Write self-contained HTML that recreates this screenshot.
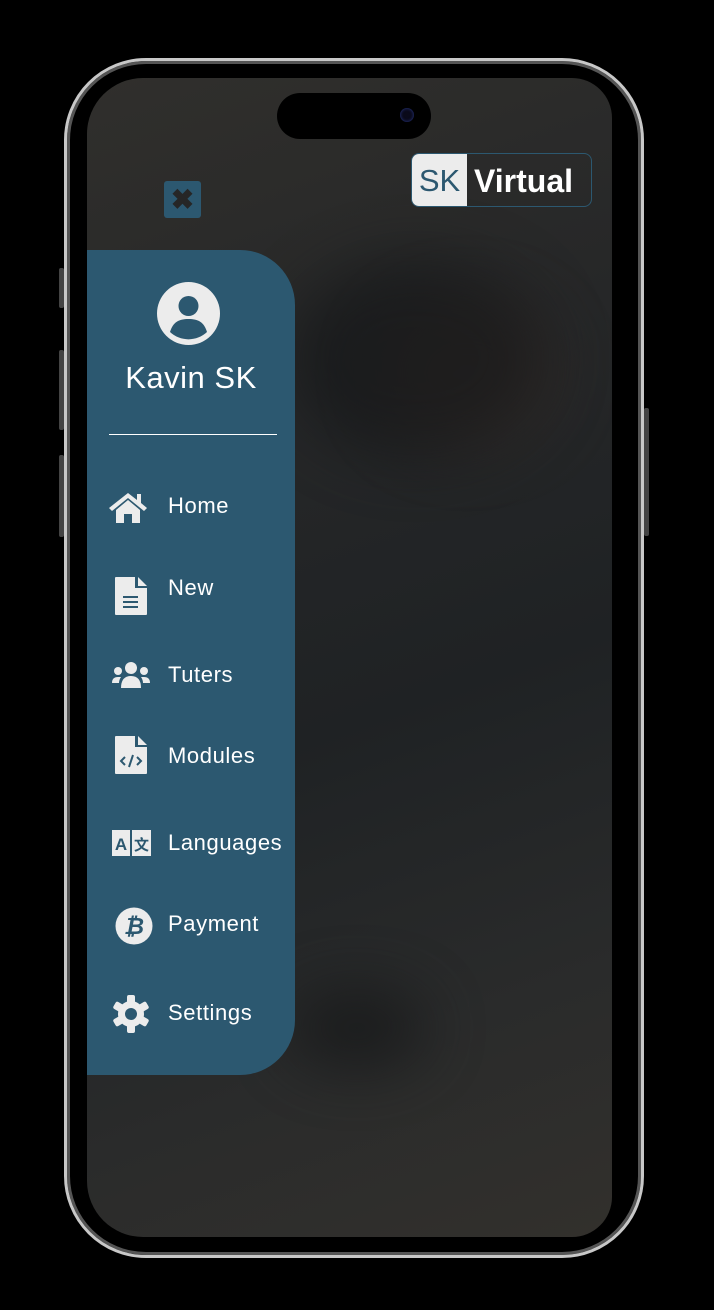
<!DOCTYPE html>
<html><head><style>
*{margin:0;padding:0;box-sizing:border-box}
body{width:714px;height:1310px;background:#000;position:relative;overflow:hidden;font-family:"Liberation Sans",sans-serif}
.frame{position:absolute;left:64px;top:58px;width:580px;height:1200px;border-radius:82px;border:3px solid #c8c8c8;background:#000;box-shadow:inset 0 0 0 3px #555}
.btn{position:absolute;background:#444;border-radius:2px}
.screen{position:absolute;left:87px;top:78px;width:525px;height:1159px;border-radius:56px 40px 40px 56px;overflow:hidden;background:linear-gradient(160deg,#302f2c 0%,#262728 30%,#1f2224 55%,#2a2b2b 80%,#32302c 100%)}
.blob{position:absolute;border-radius:50%;filter:blur(30px)}
.island{position:absolute;left:277px;top:93px;width:154px;height:46px;border-radius:23px;background:#000}
.cam{position:absolute;left:400px;top:108px;width:14px;height:14px;border-radius:50%;background:#0a0a1a;box-shadow:inset 0 0 3px #2a3a8a}
.close{position:absolute;left:164px;top:181px;width:37px;height:37px;background:#2c5870;border-radius:3px;color:#262626;font-size:28px;font-weight:bold;text-align:center;line-height:37px}
.logo{position:absolute;left:411px;top:153px;width:181px;height:54px;border:1px solid #2c5870;border-radius:8px;overflow:hidden}
.logo .sk{position:absolute;left:0;top:0;width:55px;height:54px;background:#ececec;color:#2c5870;font-size:31px;line-height:54px;text-align:center}
.logo .v{position:absolute;left:62px;top:0;color:#fff;font-size:32px;font-weight:bold;line-height:54px}
.panel{position:absolute;left:87px;top:250px;width:208px;height:825px;background:#2c5870;border-radius:0 55px 55px 0}
.name{position:absolute;left:0;width:208px;top:360px;text-align:center;color:#fff;font-size:31px;letter-spacing:.5px}
.rule{position:absolute;left:109px;top:434px;width:168px;height:1px;background:#fff}
.item{position:absolute;left:168px;color:#fff;font-size:22px;letter-spacing:.6px}
.ic{position:absolute}
</style></head><body>
<div class="btn" style="left:59px;top:268px;width:5px;height:40px"></div>
<div class="btn" style="left:59px;top:350px;width:5px;height:80px"></div>
<div class="btn" style="left:59px;top:455px;width:5px;height:82px"></div>
<div class="btn" style="left:644px;top:408px;width:5px;height:128px"></div>
<div class="frame"></div>
<div class="screen">
 <div class="blob" style="left:290px;top:220px;width:180px;height:150px;background:#3a302b;opacity:.6"></div>
 <div class="blob" style="left:200px;top:180px;width:260px;height:200px;background:#121416;opacity:.6"></div>
 <div class="blob" style="left:200px;top:910px;width:140px;height:80px;background:#151617;opacity:.7"></div>
</div>
<div class="island"></div><div class="cam"></div>
<div class="close">✖</div>
<div class="logo"><div class="sk">SK</div><div class="v">Virtual</div></div>
<div class="panel"></div>
<svg class="ic" style="left:157px;top:282px" width="63" height="63" viewBox="0 0 63 63"><circle cx="31.5" cy="31.5" r="31.5" fill="#ececec"/><circle cx="31.5" cy="24" r="10" fill="#2c5870"/><path d="M13 50 C16 40 22 37 31.5 37 C41 37 47 40 50 50 A27 27 0 0 1 13 50Z" fill="#2c5870"/></svg>
<div class="name" style="left:87px;width:208px;position:absolute">Kavin SK</div>
<div class="rule"></div>
<svg class="ic" style="left:108px;top:490px" width="40" height="33" viewBox="0 0 40 33"><path d="M20 3 L1 18 L4 21 L20 8 L36 21 L39 18 L33 13 L33 4 L29 4 L29 10Z" fill="#ececec"/><path d="M8 20 L20 10 L32 20 L32 33 L24 33 L24 24 L16 24 L16 33 L8 33Z" fill="#ececec"/></svg>
<div class="item" style="top:493px">Home</div>
<svg class="ic" style="left:115px;top:577px" width="32" height="38" viewBox="0 0 32 38"><path d="M0 1 Q0 0 1 0 L20 0 L20 11 L32 11 L32 37 Q32 38 31 38 L1 38 Q0 38 0 37Z M23 0 L32 9 L23 9Z" fill="#ececec"/><rect x="8" y="19" width="15" height="2" fill="#2c5870"/><rect x="8" y="24" width="15" height="2" fill="#2c5870"/><rect x="8" y="29" width="15" height="2" fill="#2c5870"/></svg>
<div class="item" style="top:575px">New</div>
<svg class="ic" style="left:112px;top:662px" width="38" height="26" viewBox="0 0 38 26"><circle cx="19" cy="6" r="6" fill="#ececec"/><circle cx="6" cy="9" r="4" fill="#ececec"/><circle cx="32" cy="9" r="4" fill="#ececec"/><path d="M9 26 Q9 14 19 14 Q29 14 29 26Z" fill="#ececec"/><path d="M0 21 Q0 15 6 15 L9 15 Q7 18 7 21Z M38 21 Q38 15 32 15 L29 15 Q31 18 31 21Z" fill="#ececec"/></svg>
<div class="item" style="top:662px">Tuters</div>
<svg class="ic" style="left:115px;top:736px" width="32" height="38" viewBox="0 0 32 38"><path d="M0 1 Q0 0 1 0 L20 0 L20 11 L32 11 L32 37 Q32 38 31 38 L1 38 Q0 38 0 37Z M23 0 L32 9 L23 9Z" fill="#ececec"/><path d="M10 21 L6 25 L10 29 M22 21 L26 25 L22 29 M18 19 L14 31" stroke="#2c5870" stroke-width="2" fill="none"/></svg>
<div class="item" style="top:743px">Modules</div>
<svg class="ic" style="left:112px;top:830px" width="39" height="26" viewBox="0 0 39 26"><rect x="0" y="0" width="18" height="26" fill="#ececec"/><rect x="20" y="0" width="19" height="26" fill="#ececec"/><text x="9" y="20" text-anchor="middle" font-family="Liberation Sans" font-weight="bold" font-size="17" fill="#2c5870">A</text><text x="29.5" y="20" text-anchor="middle" font-family="Noto Sans CJK SC" font-weight="bold" font-size="15" fill="#2c5870">文</text></svg>
<div class="item" style="top:830px">Languages</div>
<svg class="ic" style="left:115px;top:907px" width="38" height="38" viewBox="0 0 38 38"><circle cx="19" cy="19" r="18.5" fill="#ececec"/><text x="19" y="27" text-anchor="middle" font-family="Liberation Sans" font-weight="bold" font-style="italic" font-size="23" fill="#2c5870">₿</text></svg>
<div class="item" style="top:911px">Payment</div>
<svg class="ic" style="left:112px;top:995px" width="38" height="38" viewBox="0 0 38 38"><g fill="#ececec"><circle cx="19" cy="19" r="13"/><rect x="15" y="0" width="8" height="38" rx="2"/><rect x="15" y="0" width="8" height="38" rx="2" transform="rotate(60 19 19)"/><rect x="15" y="0" width="8" height="38" rx="2" transform="rotate(120 19 19)"/></g><circle cx="19" cy="19" r="6" fill="#2c5870"/></svg>
<div class="item" style="top:1000px">Settings</div>
</body></html>
